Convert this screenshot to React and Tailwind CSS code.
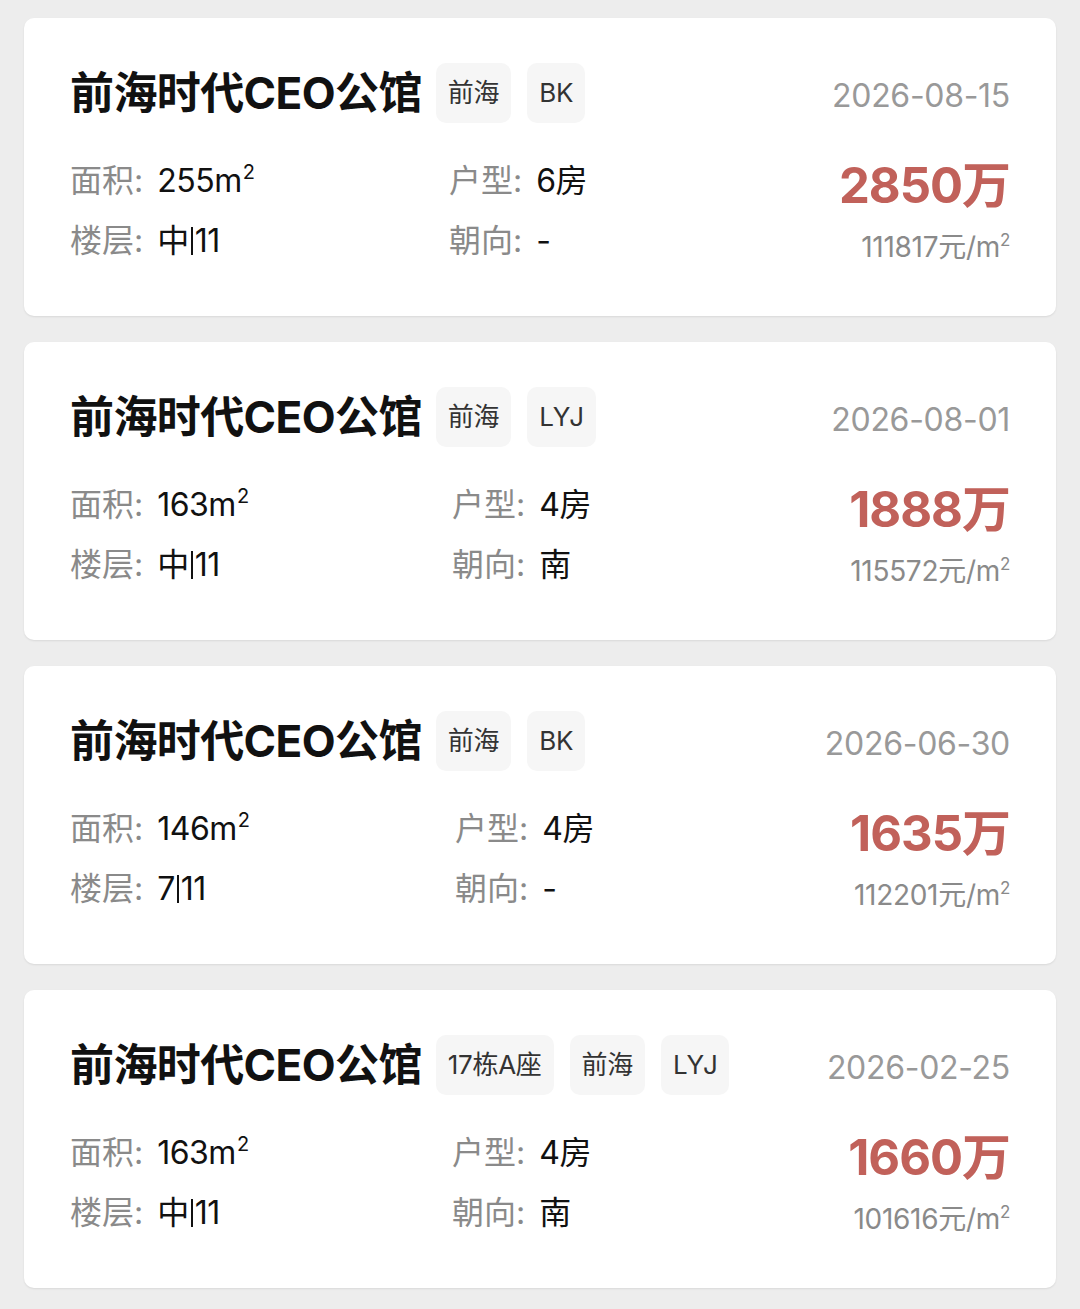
import React from "react";

const listings = [
  {
    name: "前海时代CEO公馆",
    tags: ["前海", "BK"],
    date: "2026-08-15",
    area: "255",
    layout: "6房",
    floor: "中|11",
    facing: "-",
    price: "2850万",
    unit: "111817",
    leftCol: "w-[379px]",
  },
  {
    name: "前海时代CEO公馆",
    tags: ["前海", "LYJ"],
    date: "2026-08-01",
    area: "163",
    layout: "4房",
    floor: "中|11",
    facing: "南",
    price: "1888万",
    unit: "115572",
    leftCol: "w-[382px]",
  },
  {
    name: "前海时代CEO公馆",
    tags: ["前海", "BK"],
    date: "2026-06-30",
    area: "146",
    layout: "4房",
    floor: "7|11",
    facing: "-",
    price: "1635万",
    unit: "112201",
    leftCol: "w-[385px]",
  },
  {
    name: "前海时代CEO公馆",
    tags: ["17栋A座", "前海", "LYJ"],
    date: "2026-02-25",
    area: "163",
    layout: "4房",
    floor: "中|11",
    facing: "南",
    price: "1660万",
    unit: "101616",
    leftCol: "w-[382px]",
  },
];

// floor values like "中|11" use a thin, tight separator bar
function renderValue(v) {
  if (!v.includes("|")) return v;
  const [a, b] = v.split("|");
  return (
    <>
      {a}
      <span className="inline-block w-[2px] h-[28px] bg-[#111] mx-[2px] align-[-3px]" />
      {b}
    </>
  );
}

function Field({ label, children }) {
  return (
    <div className="flex items-center h-[60px] text-[32px] leading-[60px]">
      <span className="text-[#8a8a8a]">{label}:</span>
      <span className="text-[#111] ml-[14px] tracking-[-0.5px]">{children}</span>
    </div>
  );
}

function Card({ item }) {
  return (
    <div className="bg-white rounded-[10px] shadow-[0_1px_2px_rgba(0,0,0,0.09)] pl-[46px] pr-[46px] pt-[45px] pb-[45px] flex justify-between">
      <div>
        {/* title + tags */}
        <div className="flex items-center h-[60px]">
          <h2 className="text-[44px] font-bold text-[#111] leading-[60px] tracking-[-0.6px]">
            {item.name}
          </h2>
          <div className="flex items-center gap-[16px] ml-[14px]">
            {item.tags.map((t) => (
              <span
                key={t}
                className="h-[60px] px-[12px] rounded-[10px] bg-[#f6f6f6] text-[26px] text-[#333] leading-[60px] tracking-[-0.3px]"
              >
                {t}
              </span>
            ))}
          </div>
        </div>

        {/* info grid */}
        <div className="flex mt-[28px]">
          <div className={item.leftCol}>
            <Field label="面积">
              {item.area}m
              <span className="relative top-[-13px] text-[20px] leading-none ml-[1px]">2</span>
            </Field>
            <Field label="楼层">{renderValue(item.floor)}</Field>
          </div>
          <div>
            <Field label="户型">{item.layout}</Field>
            <Field label="朝向">{item.facing}</Field>
          </div>
        </div>
      </div>

      {/* right side */}
      <div className="flex flex-col items-end">
        <div className="mt-[3px] h-[60px] leading-[60px] text-[32px] text-[#999] tracking-[-0.3px]">
          {item.date}
        </div>
        <div className="mt-[30px] h-[60px] leading-[60px] text-[49px] font-bold text-[#c1615a] tracking-[-1px]">
          {item.price}
        </div>
        <div className="mt-[11px] h-[40px] leading-[40px] text-[28px] text-[#8a8a8a] tracking-[-0.3px]">
          {item.unit}元/m
          <span className="relative top-[-11px] text-[17px] leading-none">2</span>
        </div>
      </div>
    </div>
  );
}

export default function App() {
  return (
    <div
      className="min-h-screen bg-[#ededed] px-[24px] pt-[18px] pb-[22px] flex flex-col gap-[26px]"
      style={{ fontFamily: 'Inter, "Noto Sans CJK SC", sans-serif' }}
    >
      {listings.map((item, i) => (
        <Card key={i} item={item} />
      ))}
    </div>
  );
}
